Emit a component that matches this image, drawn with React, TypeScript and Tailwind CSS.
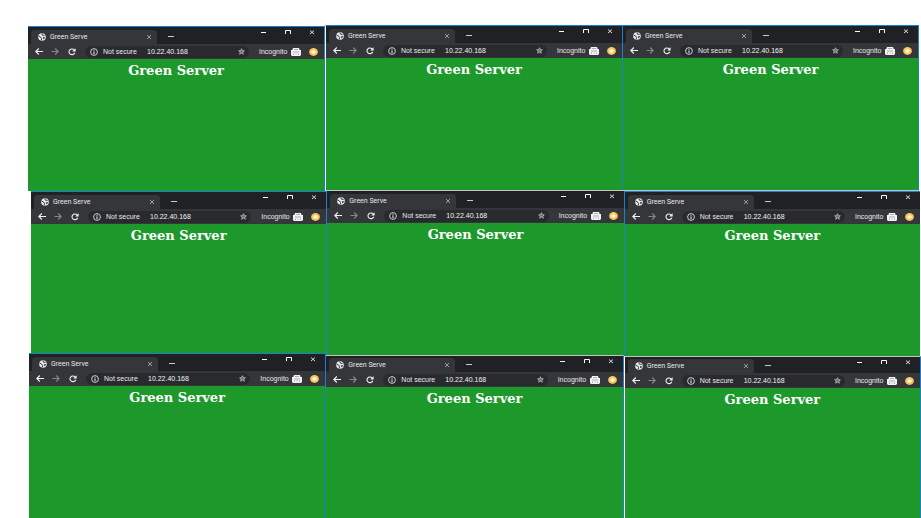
import React from "react";

type Frame = {
  id: string;
  frame: string;
  bar: string;
};

const TALL_BAR = "h-[17px]";
const SHORT_BAR = "h-4";

const rows: { id: string; layout: string; frames: Frame[] }[] = [
  {
    id: "top",
    layout: "h-[165px] pl-7 pr-0.5",
    frames: [
      { id: "a", frame: "mt-px h-[165px] border-t border-r border-[#1a80d0]", bar: TALL_BAR },
      { id: "b", frame: "h-[166px] border border-r-0 border-t-[#1a80d0] border-l-white border-b-[#c4c4c4]", bar: TALL_BAR },
      { id: "c", frame: "h-[166px] border border-t-[#1a80d0] border-x-[#1a80d0] border-b-[#c4c4c4]", bar: TALL_BAR },
    ],
  },
  {
    id: "middle",
    layout: "h-[163px] pl-[31px] pr-px",
    frames: [
      { id: "d", frame: "mt-px h-[165px] border-t border-r border-[#1a80d0]", bar: TALL_BAR },
      { id: "e", frame: "h-[165px] border-t border-[#c4c4c4]", bar: TALL_BAR },
      { id: "f", frame: "mt-px h-[165px] border-t border-l border-[#1a80d0]", bar: TALL_BAR },
    ],
  },
  {
    id: "bottom",
    layout: "flex-1 pl-[29px]",
    frames: [
      { id: "g", frame: "border-t border-r border-[#1a80d0]", bar: TALL_BAR },
      { id: "h", frame: "mt-0.5 border-t border-r border-t-[#c4c4c4] border-r-[#1a80d0]", bar: SHORT_BAR },
      { id: "i", frame: "mt-[3px] border-x border-t border-t-[#c4c4c4] border-l-white border-r-[#1a80d0]", bar: SHORT_BAR },
    ],
  },
];

function Globe() {
  return (
    <svg viewBox="0 0 8 8" className="size-2 shrink-0" aria-hidden="true">
      <circle cx="4" cy="4" r="3.8" fill="#e8eaed" />
      <path d="M0.6 3 L2.6 4 L3.6 5.6 L3.2 7.4 M4 0.6 L4.4 2.2 L6.6 2.4" stroke="#35363a" strokeWidth="1" fill="none" />
      <path d="M5 4.2 L7 4 L6.4 5.8 L5.2 6.2 Z" fill="#35363a" />
    </svg>
  );
}

function TitleBar({ height }: { height: string }) {
  return (
    <div className={`flex items-end bg-[#202124] ${height}`}>
      <div className="ml-[3px] flex h-3.5 w-[126px] shrink-0 items-center rounded-t bg-[#35363a] pl-[7px] pr-1">
        <Globe />
        <span className="ml-1 whitespace-nowrap font-[family-name:Roboto,sans-serif] text-[7px] leading-[10px] text-[#e8eaed]">
          Green Serve
        </span>
        <button type="button" aria-label="Close tab" className="ml-auto flex size-2 items-center justify-center">
          <svg viewBox="0 0 6 6" className="size-1.5">
            <path d="M1 1 L5 5 M5 1 L1 5" stroke="#a4a6aa" strokeWidth="0.9" />
          </svg>
        </button>
      </div>
      <button type="button" aria-label="New tab" className="ml-2 flex h-4 w-3 items-center justify-center">
        <svg viewBox="0 0 8 6" className="h-1.5 w-2">
          <path d="M1 3.5 H7" stroke="#c8cacd" strokeWidth="1" />
        </svg>
      </button>
      <div className="ml-auto flex self-start pt-0.5">
        <button type="button" aria-label="Minimize" className="flex h-2 w-6 items-center justify-center">
          <svg viewBox="0 0 8 8" className="size-2">
            <path d="M1 3.5 H6" stroke="#fff" strokeWidth="1" />
          </svg>
        </button>
        <button type="button" aria-label="Maximize" className="flex h-2 w-6 items-center justify-center">
          <svg viewBox="0 0 8 8" className="size-2">
            <path d="M1.5 5 V1.5 H6.5 V5" stroke="#fff" strokeWidth="1" fill="none" />
          </svg>
        </button>
        <button type="button" aria-label="Close window" className="flex h-2 w-6 items-center justify-center">
          <svg viewBox="0 0 8 8" className="size-2">
            <path d="M2 1.5 L6 5 M6 1.5 L2 5" stroke="#e8eaed" strokeWidth="0.9" />
          </svg>
        </button>
      </div>
    </div>
  );
}

function Toolbar({ id }: { id: string }) {
  const field = `address-${id}`;
  return (
    <div className="flex h-[15px] items-center bg-[#35363a] pl-[3px] text-[7px] leading-[10px] text-[#e8eaed]">
      <button type="button" aria-label="Back" className="flex w-4 justify-center">
        <svg viewBox="0 0 8 8" className="size-2">
          <path d="M8 3.5 H0.8 M3.8 0.5 L0.8 3.5 L3.8 6.5" stroke="#f1f3f4" strokeWidth="1.1" fill="none" />
        </svg>
      </button>
      <button type="button" aria-label="Forward" className="flex w-4 justify-center">
        <svg viewBox="0 0 8 8" className="size-2">
          <path d="M0.5 3.5 H7.2 M4.2 0.5 L7.2 3.5 L4.2 6.5" stroke="#85878b" strokeWidth="1.1" fill="none" />
        </svg>
      </button>
      <button type="button" aria-label="Reload" className="ml-px flex w-4 justify-center">
        <svg viewBox="0 0 8 8" className="size-2">
          <path d="M6.2 1.9 A3 2.8 0 1 0 6.8 4.8" stroke="#f1f3f4" strokeWidth="1.1" fill="none" />
          <path d="M7.6 0.2 V3.6 H4.2 Z" fill="#f1f3f4" />
        </svg>
      </button>
      <div className="ml-[5px] flex h-3 min-w-0 flex-1 items-center rounded-full bg-[#292a2d] pl-[5px] pr-1">
        <svg viewBox="0 0 8 8" className="size-2 shrink-0" aria-hidden="true">
          <circle cx="4" cy="4" r="3.4" stroke="#dadce0" strokeWidth="0.9" fill="none" />
          <path d="M4 1.8 V2.7 M4 3.4 V6.2" stroke="#f1f3f4" strokeWidth="1" />
        </svg>
        <label htmlFor={field} className="ml-[5px] w-11 shrink-0 whitespace-nowrap">
          Not secure
        </label>
        <input
          id={field}
          type="text"
          defaultValue="10.22.40.168"
          className="h-2.5 min-w-0 flex-1 bg-transparent p-0 text-[#f1f3f4] outline-none"
        />
        <button type="button" aria-label="Bookmark this page" className="flex">
          <svg viewBox="0 0 8 8" className="size-[7px]">
            <path d="M4 0.8 L4.9 3 L7.3 3.2 L5.5 4.7 L6.1 7.1 L4 5.8 L1.9 7.1 L2.5 4.7 L0.7 3.2 L3.1 3 Z" stroke="#c8cacd" strokeWidth="0.8" fill="#6c6e72" />
          </svg>
        </button>
      </div>
      <span className="ml-2.5 w-[30px] shrink-0 whitespace-nowrap">Incognito</span>
      <svg viewBox="0 0 10 8" className="ml-0.5 h-2 w-2.5 shrink-0" aria-hidden="true">
        <path d="M2 0 H8 L8.6 2 H10 V7 L9 8 H1 L0 7 V2 H1.4 Z" fill="#f1f3f4" />
        <path d="M3 1.5 H7 M2 4 H8 M2.5 5.5 V7 M5 5.5 V6.5 M7.5 5.5 V7" stroke="#8d8f93" strokeWidth="0.7" />
      </svg>
      <button type="button" aria-label="Update browser" className="ml-2 mr-1.5 flex shrink-0">
        <svg viewBox="0 0 9 8" className="h-2 w-[9px]">
          <ellipse cx="4.5" cy="4" rx="4.4" ry="3.9" fill="#fbc55a" />
          <path d="M4.5 1.8 V6 M2.2 4 H6.8" stroke="#fff8e4" strokeWidth="1.6" />
        </svg>
      </button>
    </div>
  );
}

function BrowserWindow({ id, frame, bar }: Frame) {
  return (
    <section className={`min-w-0 bg-[#1d992c] ${frame}`}>
      <TitleBar height={bar} />
      <Toolbar id={id} />
      <h1 className="pt-1 text-center font-[family-name:DejaVu_Serif,serif] text-[13px] font-bold leading-4 text-white">
        Green Server
      </h1>
    </section>
  );
}

export default function App() {
  return (
    <main className="flex h-screen flex-col overflow-hidden bg-white pt-[25px] font-[family-name:Liberation_Sans,Arial,sans-serif]">
      {rows.map((row) => (
        <div key={row.id} className={`grid shrink-0 grid-cols-3 ${row.layout}`}>
          {row.frames.map((f) => (
            <BrowserWindow key={f.id} {...f} />
          ))}
        </div>
      ))}
    </main>
  );
}
